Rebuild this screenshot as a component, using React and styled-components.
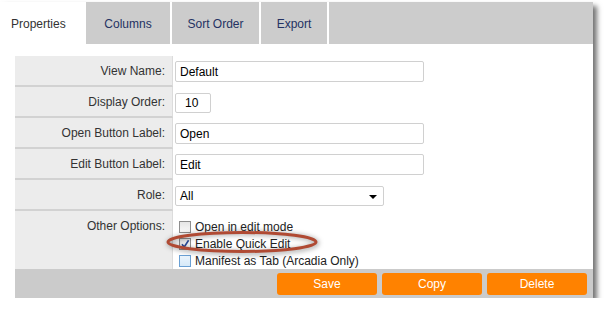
import React from "react";
import styled, { createGlobalStyle } from "styled-components";

const GlobalStyle = createGlobalStyle`
  body {
    margin: 0;
    background: #fff;
    font-family: "Liberation Sans", Arial, sans-serif;
  }
`;

const Panel = styled.div`
  margin-top: 2px;
  width: 593px;
  background: #fff;
  box-shadow: 4px 4px 5px rgba(0, 0, 0, 0.55);
`;

const TabBar = styled.div`
  display: flex;
  gap: 2px;
  height: 42px;
`;

const Tab = styled.div`
  width: ${(p) => p.$w}px;
  flex: ${(p) => (p.$fill ? 1 : "none")};
  display: flex;
  align-items: center;
  justify-content: ${(p) => (p.$active ? "flex-start" : "center")};
  padding: ${(p) => (p.$active ? "2px 0 0 11px" : "2px 0 0 0")};
  box-sizing: border-box;
  background: ${(p) => (p.$active ? "#fff" : "#cccccc")};
  color: ${(p) => (p.$active ? "#333" : "#243263")};
  font-size: 12px;
`;

const Body = styled.div`
  padding: 12px 0 0 15px;
`;

const Grid = styled.div`
  display: grid;
  grid-template-columns: 158px 1fr;
`;

const Label = styled.div`
  height: ${(p) => (p.$tall ? "58px" : "31px")};
  box-sizing: border-box;
  background: #ececec;
  border-right: 1px solid #dcdcdc;
  border-bottom: ${(p) => (p.$tall ? "none" : "2px solid #d2d2d2")};
  display: flex;
  align-items: ${(p) => (p.$tall ? "flex-start" : "center")};
  justify-content: flex-end;
  padding: ${(p) => (p.$tall ? "8px 7px 0 0" : "0 7px 0 0")};
  font-size: 12px;
  color: #333;
`;

const Value = styled.div`
  height: ${(p) => (p.$tall ? "58px" : "31px")};
  display: flex;
  align-items: ${(p) => (p.$tall ? "flex-start" : "center")};
  padding-left: 2px;
  position: relative;
`;

const TextBox = styled.div`
  width: ${(p) => p.$w}px;
  height: ${(p) => p.$h || 21}px;
  box-sizing: border-box;
  border: 1px solid #d0d0d0;
  border-radius: 2px;
  display: flex;
  align-items: center;
  padding-left: ${(p) => p.$pl || 4}px;
  font-size: 12px;
  color: #000;
  background: #fff;
`;

const Select = styled(TextBox)`
  justify-content: space-between;
  padding-right: 6px;
`;

const Arrow = styled.span`
  width: 0;
  height: 0;
  border-left: 4px solid transparent;
  border-right: 4px solid transparent;
  border-top: 4px solid #000;
  margin-top: 2px;
`;

const Options = styled.div`
  display: flex;
  flex-direction: column;
  padding: 7px 0 0 4px;
`;

const Option = styled.label`
  display: flex;
  align-items: center;
  gap: 4px;
  height: 17px;
  font-size: 12px;
  color: #222;
`;

const Box = styled.span`
  width: 12px;
  height: 12px;
  box-sizing: border-box;
  border: 1px solid ${(p) => (p.$hover ? "#6aa0d4" : "#8e8e8e")};
  background: ${(p) =>
    p.$hover
      ? "linear-gradient(#eaf4fc, #d6e9f8)"
      : "linear-gradient(#e6e6e6, #f8f8f8)"};
  display: flex;
  align-items: center;
  justify-content: center;
`;

const Mark = styled.svg`
  position: absolute;
  left: -7px;
  top: 20px;
  overflow: visible;
  pointer-events: none;
`;

const ButtonBar = styled.div`
  height: 29px;
  background: #cbcbcb;
  display: flex;
  justify-content: flex-end;
  align-items: center;
  gap: 5px;
  padding-right: 6px;
`;

const Button = styled.div`
  width: 100px;
  height: 22px;
  border-radius: 3px;
  background: #ff8200;
  color: #fff;
  font-size: 12px;
  display: flex;
  align-items: center;
  justify-content: center;
`;

const rows = [
  { label: "View Name:", content: <TextBox $w={249}>Default</TextBox> },
  { label: "Display Order:", content: <TextBox $w={36} $h={20} $pl={9}>10</TextBox> },
  { label: "Open Button Label:", content: <TextBox $w={249}>Open</TextBox> },
  { label: "Edit Button Label:", content: <TextBox $w={249}>Edit</TextBox> },
  {
    label: "Role:",
    content: (
      <Select $w={209} $h={20}>
        All
        <Arrow />
      </Select>
    ),
  },
];

const Check = () => (
  <svg width="10" height="10" viewBox="0 0 10 10">
    <path d="M2 5.2 L4.2 8 L8.6 1.2" fill="none" stroke="#2c4a96" strokeWidth="1.6" />
  </svg>
);

export default function App() {
  return (
    <>
      <GlobalStyle />
      <Panel>
        <TabBar>
          <Tab $w={84} $active>Properties</Tab>
          <Tab $w={84}>Columns</Tab>
          <Tab $w={87}>Sort Order</Tab>
          <Tab $w={66}>Export</Tab>
          <Tab $fill />
        </TabBar>
        <Body>
          <Grid>
            {rows.map((r) => (
              <React.Fragment key={r.label}>
                <Label>{r.label}</Label>
                <Value>{r.content}</Value>
              </React.Fragment>
            ))}
            <Label $tall>Other Options:</Label>
            <Value $tall>
              <Options>
                <Option>
                  <Box />
                  Open in edit mode
                </Option>
                <Option>
                  <Box>
                    <Check />
                  </Box>
                  Enable Quick Edit
                </Option>
                <Option>
                  <Box $hover />
                  Manifest as Tab (Arcadia Only)
                </Option>
              </Options>
              <Mark width="156" height="24" viewBox="0 0 156 24">
                <defs>
                  <filter id="glow" x="-20%" y="-60%" width="140%" height="220%">
                    <feGaussianBlur stdDeviation="2.5" />
                  </filter>
                </defs>
                <ellipse cx="76" cy="11" rx="74" ry="10" fill="none" stroke="#000" strokeOpacity="0.35" strokeWidth="4" filter="url(#glow)" transform="translate(1 1)" />
                <ellipse cx="76" cy="11" rx="74" ry="9.5" fill="none" stroke="#b04a33" strokeWidth="3" />
              </Mark>
            </Value>
          </Grid>
          <ButtonBar>
            <Button>Save</Button>
            <Button>Copy</Button>
            <Button>Delete</Button>
          </ButtonBar>
        </Body>
      </Panel>
    </>
  );
}
